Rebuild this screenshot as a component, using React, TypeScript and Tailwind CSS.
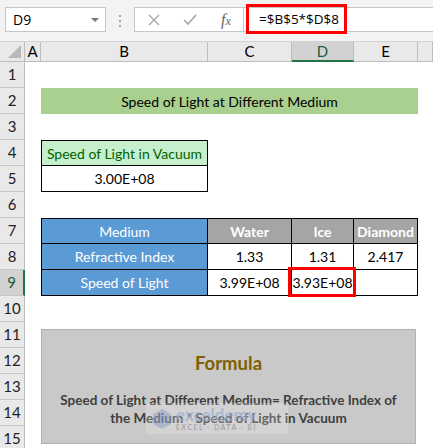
import type { ReactNode } from "react";

const colHeads = [
  { label: "A" },
  { label: "B" },
  { label: "C" },
  { label: "D", active: true },
  { label: "E" },
  { label: "" },
];

const rowNums = Array.from({ length: 15 }, (_, i) => i + 1);

function Cell({
  className,
  children,
}: {
  className: string;
  children?: ReactNode;
}) {
  return (
    <div
      className={`flex items-center justify-center whitespace-nowrap border-black text-[14px] ${className}`}
    >
      {children}
    </div>
  );
}

export default function App() {
  return (
    <div className="relative h-[448px] w-[433px] overflow-hidden bg-white font-['Lato',sans-serif] text-[15px] text-black">
      {/* formula bar */}
      <div className="flex h-[42px] items-start border-b border-[#d4d4d4] bg-[#f3f3f3] pt-[7px]">
        <div className="ml-[5px] flex h-[25px] w-[101px] items-center justify-between border border-[#c6c6c6] bg-white pl-[7px] pr-[6px] font-['Open_Sans',sans-serif] text-[14px]">
          <span>D9</span>
          <span className="h-0 w-0 border-x-[4px] border-t-[4px] border-x-transparent border-t-[#777]" />
        </div>
        <div className="mx-[13px] mt-[8px] flex flex-col gap-[3px]">
          <span className="h-[2px] w-[2px] bg-[#a6a6a6]" />
          <span className="h-[2px] w-[2px] bg-[#a6a6a6]" />
          <span className="h-[2px] w-[2px] bg-[#a6a6a6]" />
        </div>
        <div className="flex h-[25px] w-[110px] items-center border border-[#c6c6c6] bg-white pl-[13px]">
          <svg width="12" height="12" viewBox="0 0 12 12" className="mr-[23px]">
            <path d="M1 1L11 11M11 1L1 11" stroke="#a6a6a6" strokeWidth="1.3" fill="none" />
          </svg>
          <svg width="14" height="11" viewBox="0 0 14 11" className="mr-[24px]">
            <path d="M1 6L5 10L13 1" stroke="#a6a6a6" strokeWidth="1.6" fill="none" />
          </svg>
          <span className="font-['Liberation_Serif',serif] text-[16px] italic text-[#666]">
            f<span className="text-[12px]">x</span>
          </span>
        </div>
        <div className="relative h-[25px] flex-1 border-y border-[#c6c6c6] bg-white">
          <div className="absolute left-[2px] top-[-4px] flex h-[30px] w-[101px] items-center border-[3px] border-[#ff0000] pl-[10px] font-['Open_Sans',sans-serif] text-[13.5px]">
            =$B$5*$D$8
          </div>
        </div>
      </div>

      {/* sheet */}
      <div className="grid grid-cols-[25px_16px_167px_84px_62px_64px_1fr] grid-rows-[20px_repeat(15,26px)]">
        {/* column headers */}
        <div className="relative border-b border-r border-[#bdbdbd] bg-[#e9e9e9]">
          <span className="absolute bottom-[3px] right-[3px] h-0 w-0 border-b-[13px] border-l-[13px] border-b-[#b8b8b8] border-l-transparent" />
        </div>
        {colHeads.map((c, i) =>
          c.active ? (
            <div
              key={i}
              className="flex items-center justify-center border-b-2 border-r border-b-[#217346] border-r-[#bdbdbd] bg-[#d2d2d2] pt-[1px] text-[#1e5b3a]"
            >
              {c.label}
            </div>
          ) : (
            <div
              key={i}
              className="flex items-center justify-center border-b border-r border-[#bdbdbd] bg-[#e9e9e9]"
            >
              {c.label}
            </div>
          )
        )}

        {/* row headers */}
        {rowNums.map((n) =>
          n === 9 ? (
            <div
              key={n}
              className="col-start-1 flex items-center justify-center border-b border-r-2 border-b-[#c8c8c8] border-r-[#217346] bg-[#d2d2d2] text-[#1e5b3a]"
              style={{ gridRowStart: n + 1 }}
            >
              {n}
            </div>
          ) : (
            <div
              key={n}
              className="col-start-1 flex items-center justify-center border-b border-r border-b-[#c8c8c8] border-r-[#bdbdbd] bg-[#e9e9e9] text-[#222]"
              style={{ gridRowStart: n + 1 }}
            >
              {n}
            </div>
          )
        )}

        {/* title */}
        <div className="col-span-4 col-start-3 row-start-3 flex items-center justify-center bg-[#a9d08e] text-[14px]">
          Speed of Light at Different Medium
        </div>

        {/* vacuum */}
        <Cell className="col-start-3 row-start-5 border bg-[#c6efce] text-[#006100]">
          Speed of Light in Vacuum
        </Cell>
        <Cell className="col-start-3 row-start-6 border-x border-b">3.00E+08</Cell>

        {/* table */}
        <Cell className="col-start-3 row-start-8 border bg-[#5b9bd5] text-white">Medium</Cell>
        <Cell className="col-start-4 row-start-8 border-y border-r bg-[#a5a5a5] font-bold text-white">
          Water
        </Cell>
        <Cell className="col-start-5 row-start-8 border-y border-r bg-[#a5a5a5] font-bold text-white">
          Ice
        </Cell>
        <Cell className="col-start-6 row-start-8 border-y border-r bg-[#a5a5a5] font-bold text-white">
          Diamond
        </Cell>

        <Cell className="col-start-3 row-start-9 border-x border-b bg-[#5b9bd5] text-white">
          Refractive Index
        </Cell>
        <Cell className="col-start-4 row-start-9 border-b border-r">1.33</Cell>
        <Cell className="col-start-5 row-start-9 border-b border-r">1.31</Cell>
        <Cell className="col-start-6 row-start-9 border-b border-r">2.417</Cell>

        <Cell className="col-start-3 row-start-10 border-x border-b bg-[#5b9bd5] text-white">
          Speed of Light
        </Cell>
        <Cell className="col-start-4 row-start-10 border-b border-r">3.99E+08</Cell>
        <Cell className="relative col-start-5 row-start-10 border-b border-r">
          3.93E+08
          <span className="absolute left-[-4px] top-[-3px] h-[30px] w-[68px] border-[3px] border-[#ff0000]" />
        </Cell>
        <Cell className="col-start-6 row-start-10 border-b border-r" />

        {/* formula shape */}
        <div className="relative col-span-4 col-start-3 row-span-5 row-start-12 mt-[7px] flex h-[115px] w-[375px] flex-col items-center self-start border border-[#b0b0b0] bg-[#c9c9c9]">
          <div className="mt-[20px] text-[18.5px] font-bold text-[#7f6000]">Formula</div>
          <div className="mt-[13px] whitespace-nowrap text-center text-[13.5px] font-bold leading-[18px] text-[#404040]">
            Speed of Light at Different Medium= Refractive Index of
            <br />
            the Medium * Speed of Light in Vacuum
          </div>
          <div className="absolute left-[104px] top-[73px] flex h-[31px] w-[142px] items-center bg-white/20 pl-[6px]">
            <svg width="20" height="22" viewBox="0 0 20 22" className="opacity-40">
              <path d="M10 1L19 6V16L10 21L1 16V6Z" fill="#7a8fc0" />
            </svg>
            <div className="ml-[4px] flex flex-col leading-none">
              <span className="text-[17px] font-bold text-[#9aaad2]/70">exceldemy</span>
              <span className="mt-[1px] text-[7px] tracking-[1.5px] text-[#9a9a9a]">EXCEL · DATA · BI</span>
            </div>
          </div>
        </div>
      </div>
    </div>
  );
}
